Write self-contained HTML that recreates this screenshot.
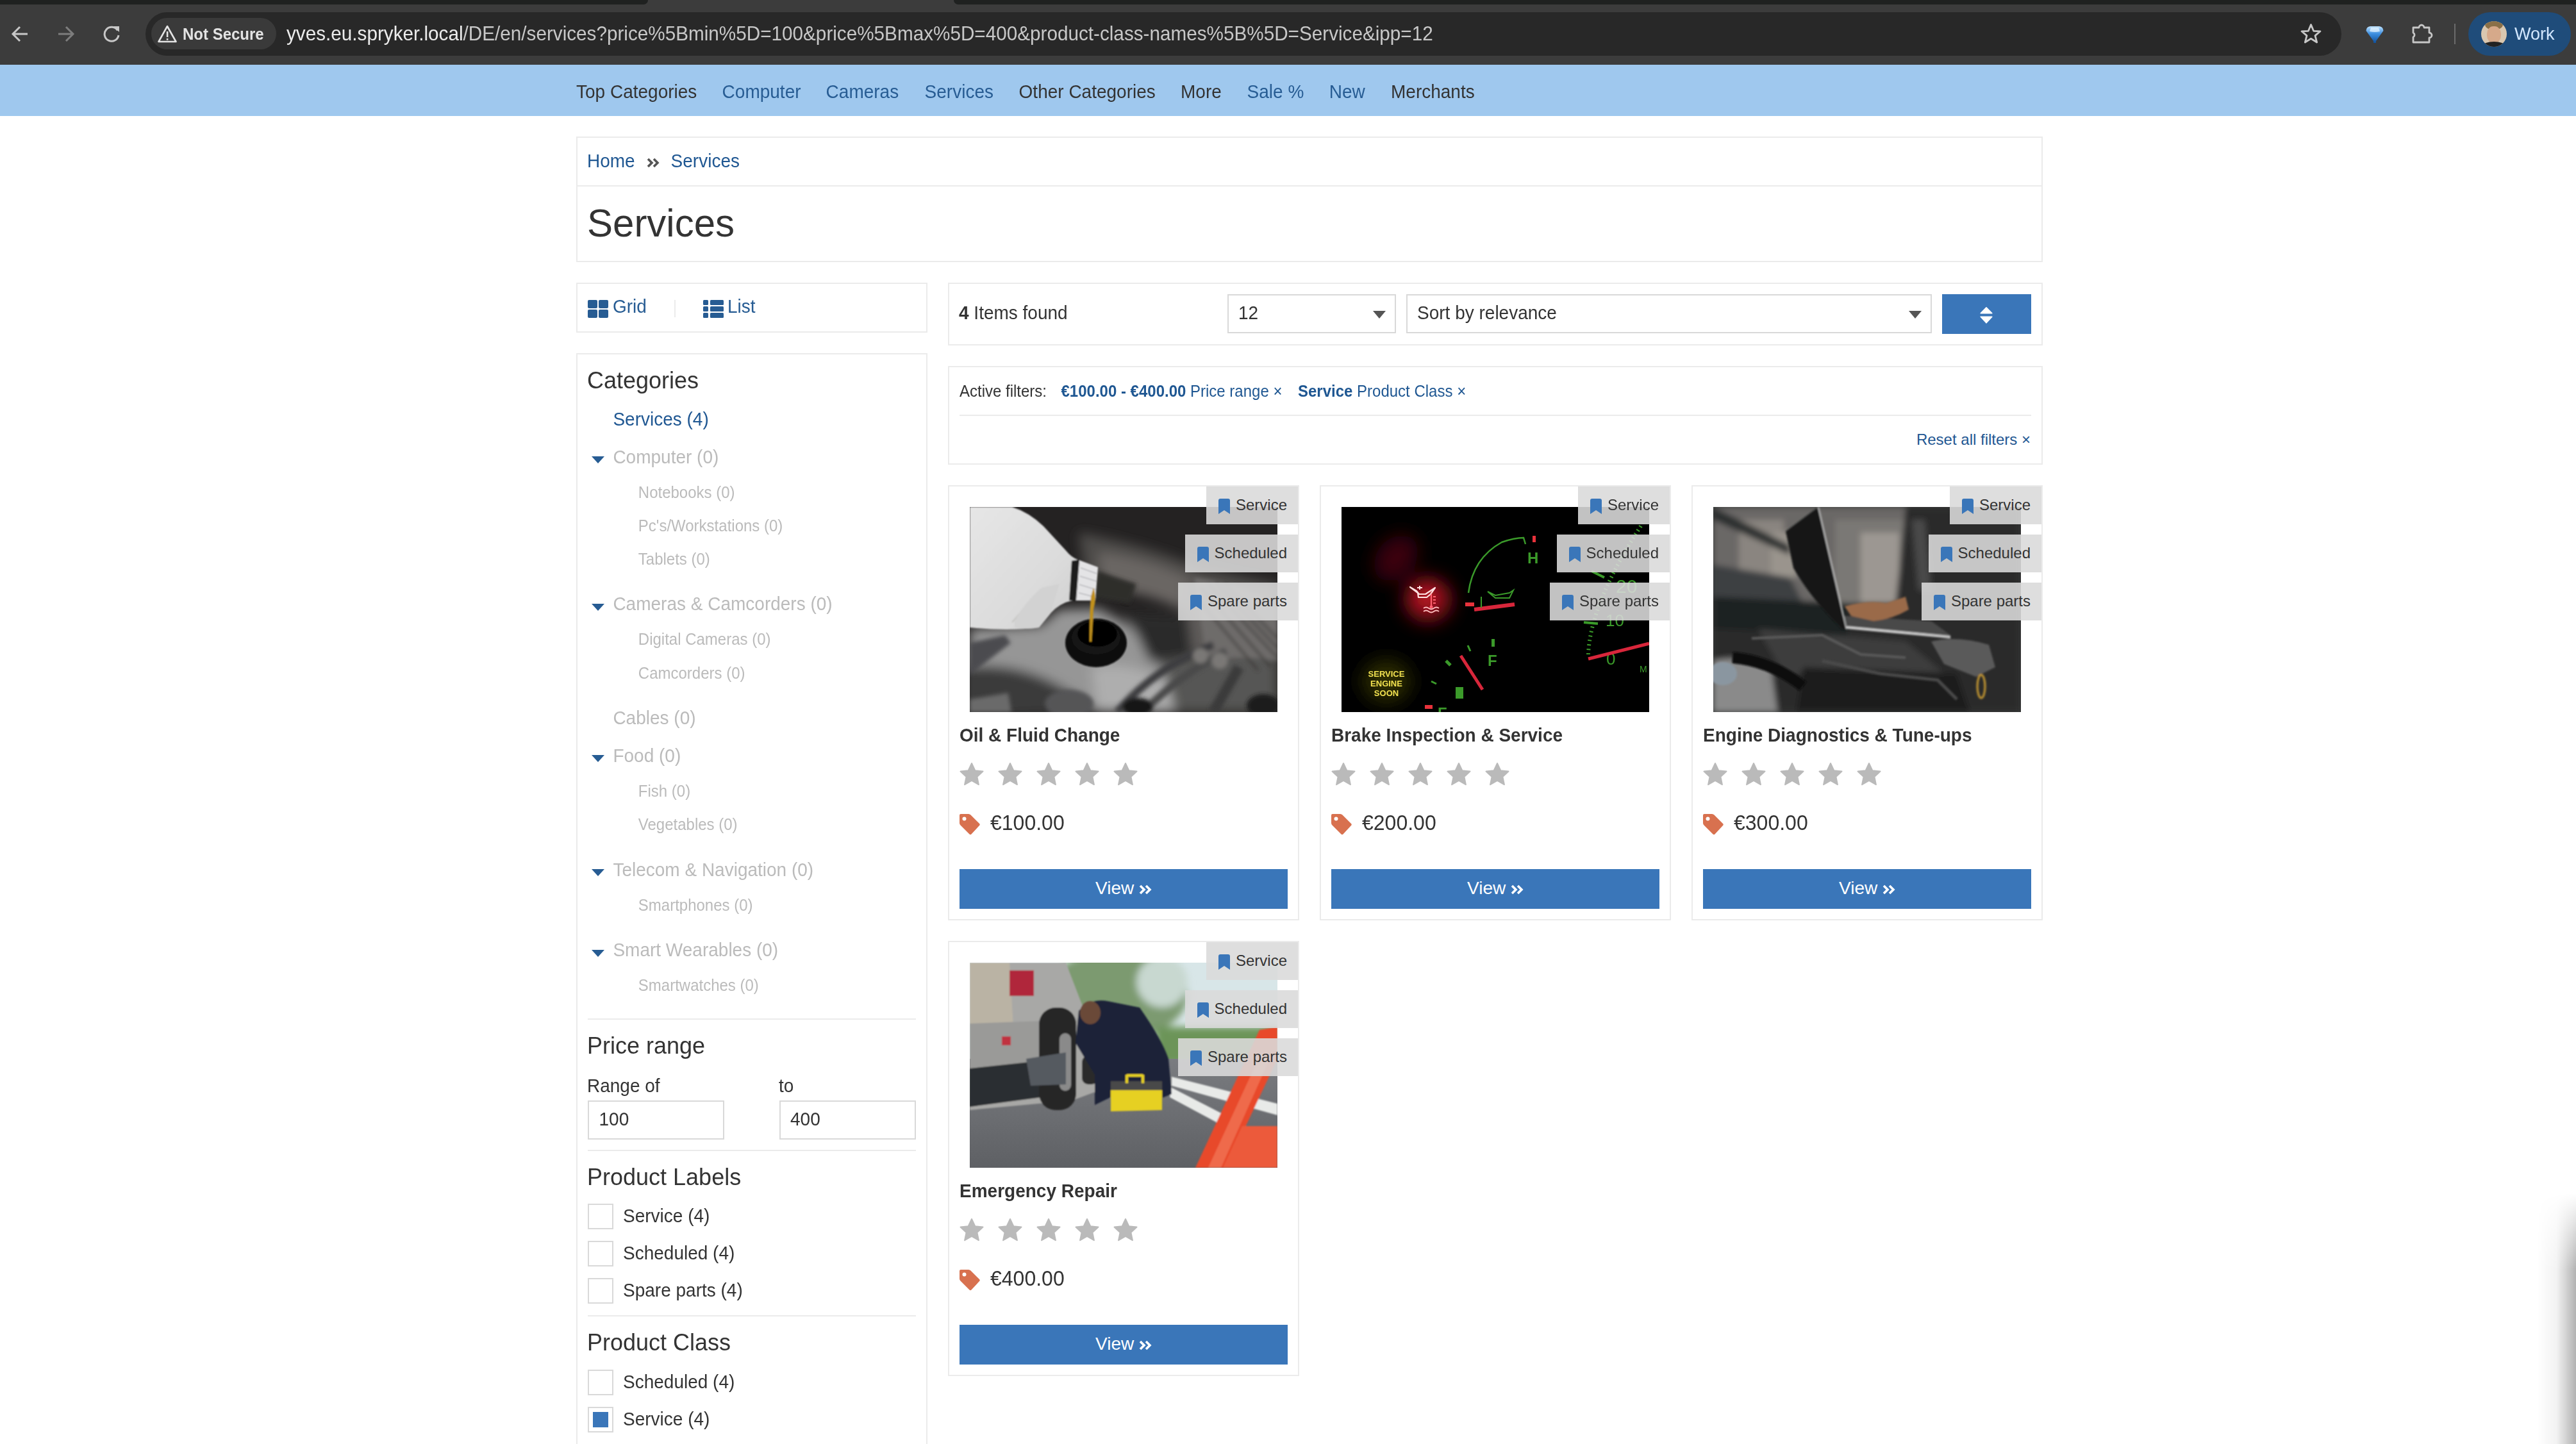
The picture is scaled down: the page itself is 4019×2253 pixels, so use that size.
<!DOCTYPE html>
<html><head><meta charset="utf-8"><title>Services</title>
<style>
html,body{margin:0;padding:0;background:#fff;width:4019px;height:2253px;overflow:hidden;position:relative}
.t{position:absolute;white-space:nowrap;line-height:1;font-family:"Liberation Sans", sans-serif}
.b{position:absolute}
b{font-weight:700}
</style></head><body>
<div class="b" style="left:0px;top:0px;width:4019px;height:101px;background:#3c3c3c;"></div><div class="b" style="left:0px;top:0px;width:1011px;height:7px;background:#1f2120;border-bottom-right-radius:12px;"></div><div class="b" style="left:1488px;top:0px;width:2531px;height:7px;background:#1f2120;border-bottom-left-radius:12px;"></div><div class="b" style="left:227px;top:19px;width:3426px;height:68px;background:#282828;border-radius:34px;"></div><div class="b" style="left:236px;top:28px;width:195px;height:49px;background:#3a3a3a;border-radius:25px;"></div><svg class="b" style="left:245px;top:38px" width="32" height="30" viewBox="0 0 32 30"><path d="M16 3 L29.5 27 H2.5 Z" fill="none" stroke="#e3e3e3" stroke-width="2.6" stroke-linejoin="round"/><rect x="14.8" y="11" width="2.6" height="9" fill="#e3e3e3"/><rect x="14.8" y="22" width="2.6" height="2.6" fill="#e3e3e3"/></svg><div class="t" style="left:285.0px;top:41.7px;font-size:24px;color:#e3e3e3;font-weight:700;transform-origin:0 20.3px;transform:scaleY(1.05);">Not Secure</div><svg class="b" style="left:17px;top:39px" width="28" height="28" viewBox="0 0 28 28"><path d="M26 14 H4 M14 3 L3 14 L14 25" fill="none" stroke="#c7c7c7" stroke-width="3"/></svg><svg class="b" style="left:89px;top:39px" width="28" height="28" viewBox="0 0 28 28"><path d="M2 14 H24 M14 3 L25 14 L14 25" fill="none" stroke="#7d7d7d" stroke-width="3"/></svg><svg class="b" style="left:160px;top:39px" width="30" height="28" viewBox="0 0 30 28"><path d="M23.5 8.5 A11 11 0 1 0 25 16" fill="none" stroke="#c7c7c7" stroke-width="3"/><path d="M17 2 H26 V11 Z" fill="#c7c7c7"/></svg><div class="t" style="left:447.0px;top:37.9px;font-size:29.7px;color:#c8c8c8;font-weight:400;transform-origin:0 25.1px;transform:scaleY(1.05);"><span style="color:#ececec">yves.eu.spryker.local</span>/DE/en/services?price%5Bmin%5D=100&amp;price%5Bmax%5D=400&amp;product-class-names%5B%5D=Service&amp;ipp=12</div><svg class="b" style="left:3588px;top:36px" width="35" height="32" viewBox="0 0 35 32"><path d="M17.5 2.5 L21.6 12.3 L32 12.8 L24 19.6 L26.7 30 L17.5 24.3 L8.3 30 L11 19.6 L3 12.8 L13.4 12.3 Z" fill="none" stroke="#c7c7c7" stroke-width="2.8" stroke-linejoin="round"/></svg><svg class="b" style="left:3690px;top:39px" width="30" height="30" viewBox="0 0 30 30"><defs><linearGradient id="dg" x1="0" y1="0" x2="0" y2="1"><stop offset="0" stop-color="#bfe3ff"/><stop offset="0.45" stop-color="#3d8fe0"/><stop offset="1" stop-color="#0f4f9a"/></linearGradient></defs><path d="M1.5 9 Q2 2.5 8 2 H22 Q28 2.5 28.5 9 L17 25 V28 H13 V25 Z" fill="url(#dg)"/><path d="M9 4 H21 L23 10 Q15 12 7 10 Z" fill="#e6f4ff" opacity="0.75"/></svg><svg class="b" style="left:3761px;top:33px" width="38" height="36" viewBox="0 0 38 36"><path d="M4 10 H13 A4 4 0 0 1 21 10 H29 V18 A4 4 0 0 1 29 26 V33 H4 V25 A4 4 0 0 0 4 18 Z" fill="none" stroke="#c7c7c7" stroke-width="2.8" stroke-linejoin="round"/></svg><div class="b" style="left:3829px;top:37px;width:2px;height:32px;background:#6b6b6b;"></div><div class="b" style="left:3851px;top:19px;width:160px;height:68px;background:#1f4c7a;border-radius:34px;"></div><div class="b" style="left:3871px;top:33px;width:40px;height:40px;border-radius:50%;overflow:hidden;background:#d9c7b0"><div style="position:absolute;left:6px;top:-4px;width:28px;height:18px;border-radius:50%;background:#8a7048"></div><div style="position:absolute;left:9px;top:8px;width:22px;height:26px;border-radius:45%;background:#d6a98a"></div><div style="position:absolute;left:2px;top:32px;width:36px;height:14px;border-radius:50%;background:#222"></div></div><div class="t" style="left:3923.0px;top:40.1px;font-size:27px;color:#d2e7ff;font-weight:400;transform-origin:0 22.9px;transform:scaleY(1.05);">Work</div><div class="b" style="left:0px;top:101px;width:4019px;height:80px;background:#9fc8ee;"></div><div class="t" style="left:899.0px;top:130.0px;font-size:28px;color:#333;font-weight:400;transform-origin:0 23.7px;transform:scaleY(1.05);">Top Categories</div><div class="t" style="left:1126.6px;top:130.0px;font-size:28px;color:#275c93;font-weight:400;transform-origin:0 23.7px;transform:scaleY(1.05);">Computer</div><div class="t" style="left:1288.6px;top:130.0px;font-size:28px;color:#275c93;font-weight:400;transform-origin:0 23.7px;transform:scaleY(1.05);">Cameras</div><div class="t" style="left:1442.6px;top:130.0px;font-size:28px;color:#275c93;font-weight:400;transform-origin:0 23.7px;transform:scaleY(1.05);">Services</div><div class="t" style="left:1589.6px;top:130.0px;font-size:28px;color:#333;font-weight:400;transform-origin:0 23.7px;transform:scaleY(1.05);">Other Categories</div><div class="t" style="left:1842.0px;top:130.0px;font-size:28px;color:#333;font-weight:400;transform-origin:0 23.7px;transform:scaleY(1.05);">More</div><div class="t" style="left:1945.6px;top:130.0px;font-size:28px;color:#275c93;font-weight:400;transform-origin:0 23.7px;transform:scaleY(1.05);">Sale %</div><div class="t" style="left:2073.8px;top:130.0px;font-size:28px;color:#275c93;font-weight:400;transform-origin:0 23.7px;transform:scaleY(1.05);">New</div><div class="t" style="left:2170.0px;top:130.0px;font-size:28px;color:#333;font-weight:400;transform-origin:0 23.7px;transform:scaleY(1.05);">Merchants</div><div class="b" style="left:899px;top:213px;width:2288px;height:196px;background:#fff;border:2px solid #ebebeb;box-sizing:border-box;"></div><div class="b" style="left:901px;top:289px;width:2284px;height:2px;background:#ebebeb;"></div><div class="t" style="left:916.0px;top:237.6px;font-size:28px;color:#1f5792;font-weight:400;transform-origin:0 23.7px;transform:scaleY(1.05);">Home</div><svg class="b" style="left:1009px;top:246px" width="20" height="16" viewBox="0 0 20 16"><path d="M2 2 L8 8 L2 14 M11 2 L17 8 L11 14" fill="none" stroke="#555" stroke-width="3.6"/></svg><div class="t" style="left:1046.6px;top:237.6px;font-size:28px;color:#1f5792;font-weight:400;transform-origin:0 23.7px;transform:scaleY(1.05);">Services</div><div class="t" style="left:916.0px;top:318.6px;font-size:60px;color:#333;font-weight:400;transform-origin:0 50.8px;transform:scaleY(1.01);">Services</div><div class="b" style="left:899px;top:441px;width:548px;height:78px;background:#fff;border:2px solid #ebebeb;box-sizing:border-box;"></div><svg class="b" style="left:917px;top:468px" width="32" height="28" viewBox="0 0 32 28"><rect x="0" y="0" width="15" height="13" rx="2" fill="#275c93"/><rect x="17" y="0" width="15" height="13" rx="2" fill="#275c93"/><rect x="0" y="15" width="15" height="13" rx="2" fill="#275c93"/><rect x="17" y="15" width="15" height="13" rx="2" fill="#275c93"/></svg><div class="t" style="left:956.0px;top:465.3px;font-size:28px;color:#275c93;font-weight:400;transform-origin:0 23.7px;transform:scaleY(1.05);">Grid</div><div class="b" style="left:1052px;top:468px;width:2px;height:27px;background:#ebebeb;"></div><svg class="b" style="left:1097px;top:468px" width="32" height="28" viewBox="0 0 32 28"><rect x="0" y="0" width="8" height="8" rx="1.5" fill="#275c93"/><rect x="11" y="0" width="21" height="8" rx="1.5" fill="#275c93"/><rect x="0" y="10" width="8" height="8" rx="1.5" fill="#275c93"/><rect x="11" y="10" width="21" height="8" rx="1.5" fill="#275c93"/><rect x="0" y="20" width="8" height="8" rx="1.5" fill="#275c93"/><rect x="11" y="20" width="21" height="8" rx="1.5" fill="#275c93"/></svg><div class="t" style="left:1135.0px;top:465.3px;font-size:28px;color:#275c93;font-weight:400;transform-origin:0 23.7px;transform:scaleY(1.05);">List</div><div class="b" style="left:1479px;top:441px;width:1708px;height:98px;background:#fff;border:2px solid #ebebeb;box-sizing:border-box;"></div><div class="t" style="left:1496.0px;top:475.3px;font-size:28px;color:#333;font-weight:400;transform-origin:0 23.7px;transform:scaleY(1.05);"><b>4</b> Items found</div><div class="b" style="left:1915px;top:459px;width:263px;height:61px;background:#fff;border:2px solid #d9d9d9;box-sizing:border-box;"></div><div class="t" style="left:1932.0px;top:475.3px;font-size:28px;color:#333;font-weight:400;transform-origin:0 23.7px;transform:scaleY(1.05);">12</div><svg class="b" style="left:2142px;top:485px" width="20" height="12" viewBox="0 0 20 12"><path d="M0 0 H20 L10 12 Z" fill="#555"/></svg><div class="b" style="left:2194px;top:459px;width:820px;height:61px;background:#fff;border:2px solid #d9d9d9;box-sizing:border-box;"></div><div class="t" style="left:2211.0px;top:475.3px;font-size:28px;color:#333;font-weight:400;transform-origin:0 23.7px;transform:scaleY(1.05);">Sort by relevance</div><svg class="b" style="left:2978px;top:485px" width="20" height="12" viewBox="0 0 20 12"><path d="M0 0 H20 L10 12 Z" fill="#555"/></svg><div class="b" style="left:3030px;top:459px;width:139px;height:62px;background:#3a76b9;"></div><svg class="b" style="left:3088px;top:478px" width="22" height="28" viewBox="0 0 22 28"><path d="M11 1.8 L19.8 10.8 H2.2 Z M2.2 16.2 H19.8 L11 25.8 Z" fill="#fff" stroke="#fff" stroke-width="1.6" stroke-linejoin="round"/></svg><div class="b" style="left:1479px;top:571px;width:1708px;height:154px;background:#fff;border:2px solid #ebebeb;box-sizing:border-box;"></div><div class="t" style="left:1497.0px;top:598.7px;font-size:24px;color:#333;font-weight:400;transform-origin:0 20.3px;transform:scaleY(1.05);">Active filters:</div><div class="t" style="left:1655.5px;top:598.7px;font-size:24px;color:#1f5792;font-weight:400;transform-origin:0 20.3px;transform:scaleY(1.05);"><b>€100.00 - €400.00</b> Price range ×</div><div class="t" style="left:2025.0px;top:598.7px;font-size:24px;color:#1f5792;font-weight:400;transform-origin:0 20.3px;transform:scaleY(1.05);"><b>Service</b> Product Class ×</div><div class="b" style="left:1497px;top:647px;width:1672px;height:2px;background:#ebebeb;"></div><div class="t" style="right:851px;top:674.3px;font-size:24px;color:#1f5792">Reset all filters ×</div><div class="b" style="left:899px;top:551px;width:548px;height:1749px;background:#fff;border:2px solid #ebebeb;box-sizing:border-box;"></div><div class="t" style="left:916.0px;top:575.5px;font-size:36px;color:#333;font-weight:400;transform-origin:0 30.5px;transform:scaleY(1.05);">Categories</div><div class="t" style="left:956.4px;top:641.0px;font-size:28px;color:#1f5792;font-weight:400;transform-origin:0 23.7px;transform:scaleY(1.05);">Services (4)</div><div class="t" style="left:956.4px;top:699.6px;font-size:28px;color:#bbb;font-weight:400;transform-origin:0 23.7px;transform:scaleY(1.05);">Computer (0)</div><svg class="b" style="left:923px;top:712.0px" width="20" height="11" viewBox="0 0 20 11"><path d="M0 0 H20 L10 11 Z" fill="#275c93"/></svg><div class="t" style="left:995.8px;top:756.7px;font-size:24px;color:#bbb;font-weight:400;transform-origin:0 20.3px;transform:scaleY(1.05);">Notebooks (0)</div><div class="t" style="left:995.8px;top:809.0px;font-size:24px;color:#bbb;font-weight:400;transform-origin:0 20.3px;transform:scaleY(1.05);">Pc's/Workstations (0)</div><div class="t" style="left:995.8px;top:860.8px;font-size:24px;color:#bbb;font-weight:400;transform-origin:0 20.3px;transform:scaleY(1.05);">Tablets (0)</div><div class="t" style="left:956.4px;top:929.2px;font-size:28px;color:#bbb;font-weight:400;transform-origin:0 23.7px;transform:scaleY(1.05);">Cameras &amp; Camcorders (0)</div><svg class="b" style="left:923px;top:941.6px" width="20" height="11" viewBox="0 0 20 11"><path d="M0 0 H20 L10 11 Z" fill="#275c93"/></svg><div class="t" style="left:995.8px;top:986.4px;font-size:24px;color:#bbb;font-weight:400;transform-origin:0 20.3px;transform:scaleY(1.05);">Digital Cameras (0)</div><div class="t" style="left:995.8px;top:1038.6px;font-size:24px;color:#bbb;font-weight:400;transform-origin:0 20.3px;transform:scaleY(1.05);">Camcorders (0)</div><div class="t" style="left:956.4px;top:1107.0px;font-size:28px;color:#bbb;font-weight:400;transform-origin:0 23.7px;transform:scaleY(1.05);">Cables (0)</div><div class="t" style="left:956.4px;top:1165.6px;font-size:28px;color:#bbb;font-weight:400;transform-origin:0 23.7px;transform:scaleY(1.05);">Food (0)</div><svg class="b" style="left:923px;top:1178.0px" width="20" height="11" viewBox="0 0 20 11"><path d="M0 0 H20 L10 11 Z" fill="#275c93"/></svg><div class="t" style="left:995.8px;top:1222.6px;font-size:24px;color:#bbb;font-weight:400;transform-origin:0 20.3px;transform:scaleY(1.05);">Fish (0)</div><div class="t" style="left:995.8px;top:1274.6px;font-size:24px;color:#bbb;font-weight:400;transform-origin:0 20.3px;transform:scaleY(1.05);">Vegetables (0)</div><div class="t" style="left:956.4px;top:1343.5px;font-size:28px;color:#bbb;font-weight:400;transform-origin:0 23.7px;transform:scaleY(1.05);">Telecom &amp; Navigation (0)</div><svg class="b" style="left:923px;top:1355.9px" width="20" height="11" viewBox="0 0 20 11"><path d="M0 0 H20 L10 11 Z" fill="#275c93"/></svg><div class="t" style="left:995.8px;top:1400.5px;font-size:24px;color:#bbb;font-weight:400;transform-origin:0 20.3px;transform:scaleY(1.05);">Smartphones (0)</div><div class="t" style="left:956.4px;top:1469.4px;font-size:28px;color:#bbb;font-weight:400;transform-origin:0 23.7px;transform:scaleY(1.05);">Smart Wearables (0)</div><svg class="b" style="left:923px;top:1481.8px" width="20" height="11" viewBox="0 0 20 11"><path d="M0 0 H20 L10 11 Z" fill="#275c93"/></svg><div class="t" style="left:995.8px;top:1526.4px;font-size:24px;color:#bbb;font-weight:400;transform-origin:0 20.3px;transform:scaleY(1.05);">Smartwatches (0)</div><div class="b" style="left:917px;top:1589px;width:512px;height:2px;background:#ebebeb;"></div><div class="t" style="left:916.0px;top:1614.3px;font-size:36px;color:#333;font-weight:400;transform-origin:0 30.5px;transform:scaleY(1.05);">Price range</div><div class="t" style="left:916.0px;top:1680.5px;font-size:28px;color:#333;font-weight:400;transform-origin:0 23.7px;transform:scaleY(1.05);">Range of</div><div class="t" style="left:1215.0px;top:1680.5px;font-size:28px;color:#333;font-weight:400;transform-origin:0 23.7px;transform:scaleY(1.05);">to</div><div class="b" style="left:917px;top:1717px;width:213px;height:61px;background:#fff;border:2px solid #d9d9d9;box-sizing:border-box;"></div><div class="b" style="left:1216px;top:1717px;width:213px;height:61px;background:#fff;border:2px solid #d9d9d9;box-sizing:border-box;"></div><div class="t" style="left:934.5px;top:1732.9px;font-size:28px;color:#333;font-weight:400;transform-origin:0 23.7px;transform:scaleY(1.05);">100</div><div class="t" style="left:1233.0px;top:1732.9px;font-size:28px;color:#333;font-weight:400;transform-origin:0 23.7px;transform:scaleY(1.05);">400</div><div class="b" style="left:917px;top:1794px;width:512px;height:2px;background:#ebebeb;"></div><div class="t" style="left:916.0px;top:1818.8px;font-size:36px;color:#333;font-weight:400;transform-origin:0 30.5px;transform:scaleY(1.05);">Product Labels</div><div class="b" style="left:917px;top:1878px;width:40px;height:40px;background:#fff;border:2px solid #d9d9d9;box-sizing:border-box;"></div><div class="t" style="left:972.0px;top:1883.5px;font-size:28px;color:#333;font-weight:400;transform-origin:0 23.7px;transform:scaleY(1.05);">Service (4)</div><div class="b" style="left:917px;top:1936px;width:40px;height:40px;background:#fff;border:2px solid #d9d9d9;box-sizing:border-box;"></div><div class="t" style="left:972.0px;top:1942.3px;font-size:28px;color:#333;font-weight:400;transform-origin:0 23.7px;transform:scaleY(1.05);">Scheduled (4)</div><div class="b" style="left:917px;top:1994px;width:40px;height:40px;background:#fff;border:2px solid #d9d9d9;box-sizing:border-box;"></div><div class="t" style="left:972.0px;top:2000.1px;font-size:28px;color:#333;font-weight:400;transform-origin:0 23.7px;transform:scaleY(1.05);">Spare parts (4)</div><div class="b" style="left:917px;top:2052px;width:512px;height:2px;background:#ebebeb;"></div><div class="t" style="left:916.0px;top:2076.8px;font-size:36px;color:#333;font-weight:400;transform-origin:0 30.5px;transform:scaleY(1.05);">Product Class</div><div class="b" style="left:917px;top:2137px;width:40px;height:40px;background:#fff;border:2px solid #d9d9d9;box-sizing:border-box;"></div><div class="t" style="left:972.0px;top:2142.8px;font-size:28px;color:#333;font-weight:400;transform-origin:0 23.7px;transform:scaleY(1.05);">Scheduled (4)</div><div class="b" style="left:917px;top:2195px;width:40px;height:40px;background:#fff;border:2px solid #d9d9d9;box-sizing:border-box;"></div><div class="b" style="left:925px;top:2203px;width:24px;height:24px;background:#3a76b9;"></div><div class="t" style="left:972.0px;top:2200.5px;font-size:28px;color:#333;font-weight:400;transform-origin:0 23.7px;transform:scaleY(1.05);">Service (4)</div><div class="b" style="left:1479px;top:757px;width:548px;height:679px;background:#fff;border:2px solid #ebebeb;box-sizing:border-box;"></div><div class="b" style="left:1513px;top:791px;width:480px;height:320px;overflow:hidden"><svg width="480" height="320" viewBox="0 0 480 320">
<defs>
<filter id="b1" x="-30%" y="-30%" width="160%" height="160%"><feGaussianBlur stdDeviation="9"/></filter>
<filter id="b1m" x="-30%" y="-30%" width="160%" height="160%"><feGaussianBlur stdDeviation="3"/></filter>
<filter id="b1s" x="-20%" y="-20%" width="140%" height="140%"><feGaussianBlur stdDeviation="0.8"/></filter>
<linearGradient id="bot" x1="0" y1="0" x2="1" y2="1"><stop offset="0" stop-color="#e6e6e6"/><stop offset="0.6" stop-color="#dcdcdc"/><stop offset="1" stop-color="#cfcfcf"/></linearGradient>
</defs>
<rect width="480" height="320" fill="#242222"/>
<g filter="url(#b1)">
<path d="M170 40 Q280 60 360 95 L480 120 L480 150 L360 140 Q270 120 180 110 Z" fill="#4e4b49"/>
<path d="M200 70 Q280 80 350 115 L330 160 Q270 130 210 130 Z" fill="#6a6663"/>
<path d="M330 120 L480 130 L480 250 L340 230 Z" fill="#5e5c5a"/>
<path d="M0 190 L110 185 L140 160 L200 158 L250 185 L300 250 L340 320 L0 320 Z" fill="#969696"/>
<path d="M190 250 Q250 240 300 270 L330 320 L200 320 Z" fill="#aeaeae"/>
<path d="M-10 250 Q100 235 200 320 L-10 330 Z" fill="#3a3a3a"/>
<path d="M245 165 L340 170 L350 250 L280 240 Z" fill="#2c2b2a"/>
<path d="M300 240 L480 220 L480 320 L320 320 Z" fill="#575654"/>
</g>
<g filter="url(#b1m)">
<path d="M0 212 L55 200 L64 212 L0 262 Z" fill="#4c4c50"/>
<path d="M350 110 Q420 120 480 150 L480 240 Q420 230 370 240 Z" fill="#6e6c6a"/>
<path d="M360 125 L470 250 M372 120 L480 235 M384 118 L480 220 M396 118 L480 205 M348 135 L450 255" stroke="#3a3836" stroke-width="3" fill="none"/>
<path d="M230 320 Q290 250 380 215" stroke="#3e3e40" stroke-width="12" fill="none"/>
<path d="M270 320 Q330 260 400 225" stroke="#48484a" stroke-width="12" fill="none"/>
<path d="M380 320 L420 250" stroke="#3a3a3a" stroke-width="16" fill="none"/>
<ellipse cx="360" cy="232" rx="12" ry="12" fill="#7a7876"/>
<ellipse cx="390" cy="240" rx="13" ry="13" fill="#7a7876"/>
<path d="M200 100 L260 120 L250 150 L190 140 Z" fill="#2e2d2c"/>
<ellipse cx="155" cy="307" rx="38" ry="22" fill="#555556"/>
<ellipse cx="262" cy="312" rx="24" ry="14" fill="#151515"/>
<ellipse cx="458" cy="310" rx="26" ry="18" fill="#1a1a1a"/>
<path d="M0 300 L60 290 L65 320 L0 320 Z" fill="#6a6a6a"/>
</g>
<g filter="url(#b1s)">
<ellipse cx="197" cy="212" rx="48" ry="38" fill="#0a0a0a"/>
<ellipse cx="197" cy="204" rx="38" ry="26" fill="#161616"/>
<ellipse cx="199" cy="198" rx="31" ry="20" fill="#030303"/>
<path d="M0 0 L66 0 Q92 8 115 30 L150 68 Q158 78 168 82 L160 146 Q140 150 126 166 L108 188 Q60 194 0 188 Z" fill="url(#bot)"/>
<path d="M66 180 L112 128 M78 186 L120 138 M92 188 L128 146" stroke="#c8c8c6" stroke-width="2.5"/>
<path d="M70 178 Q85 150 112 126 L140 120 L126 166 L108 188 Q90 192 70 188 Z" fill="#d2d2d2"/>
<path d="M159 84 L171 82 L166 146 L155 146 Z" fill="#1c1c1c"/>
<path d="M171 83 L200 94 L196 146 L166 146 Z" fill="#e4e4e6"/>
<path d="M173 95 L198 104 M172 108 L198 116 M171 121 L197 129 M170 134 L197 141" stroke="#b8b8bc" stroke-width="1.5"/>
<path d="M193 126 Q199 140 193 160 L190 210 L187 210 Q187 160 189 140 Z" fill="#c0901e"/>
</g>
</svg></div><div class="b" style="left:1882px;top:759px;width:143px;height:59px;background:rgba(218,218,218,0.89)"></div><svg class="b" style="left:1901px;top:778px" width="18" height="24" viewBox="0 0 18 24"><path d="M0 3 Q0 0 3 0 H15 Q18 0 18 3 V24 L9 18 L0 24 Z" fill="#3a76b9"/></svg><div class="t" style="right:2011px;top:775.7px;font-size:24px;color:#333">Service</div><div class="b" style="left:1849px;top:834px;width:176px;height:59px;background:rgba(218,218,218,0.89)"></div><svg class="b" style="left:1868px;top:853px" width="18" height="24" viewBox="0 0 18 24"><path d="M0 3 Q0 0 3 0 H15 Q18 0 18 3 V24 L9 18 L0 24 Z" fill="#3a76b9"/></svg><div class="t" style="right:2011px;top:850.7px;font-size:24px;color:#333">Scheduled</div><div class="b" style="left:1838px;top:909px;width:187px;height:59px;background:rgba(218,218,218,0.89)"></div><svg class="b" style="left:1857px;top:928px" width="18" height="24" viewBox="0 0 18 24"><path d="M0 3 Q0 0 3 0 H15 Q18 0 18 3 V24 L9 18 L0 24 Z" fill="#3a76b9"/></svg><div class="t" style="right:2011px;top:925.7px;font-size:24px;color:#333">Spare parts</div><div class="t" style="left:1497.0px;top:1134.0px;font-size:28px;color:#333;font-weight:700;transform-origin:0 23.7px;transform:scaleY(1.05);">Oil &amp; Fluid Change</div><svg class="b" style="left:1497.0px;top:1190px" width="38" height="37" viewBox="0 0 38 37"><path d="M19 1 L24.3 12.2 L36.5 13.6 L27.4 22 L29.9 34.2 L19 28 L8.1 34.2 L10.6 22 L1.5 13.6 L13.7 12.2 Z" fill="#bababa" stroke="#bababa" stroke-width="2" stroke-linejoin="round"/></svg><svg class="b" style="left:1557.1px;top:1190px" width="38" height="37" viewBox="0 0 38 37"><path d="M19 1 L24.3 12.2 L36.5 13.6 L27.4 22 L29.9 34.2 L19 28 L8.1 34.2 L10.6 22 L1.5 13.6 L13.7 12.2 Z" fill="#bababa" stroke="#bababa" stroke-width="2" stroke-linejoin="round"/></svg><svg class="b" style="left:1617.2px;top:1190px" width="38" height="37" viewBox="0 0 38 37"><path d="M19 1 L24.3 12.2 L36.5 13.6 L27.4 22 L29.9 34.2 L19 28 L8.1 34.2 L10.6 22 L1.5 13.6 L13.7 12.2 Z" fill="#bababa" stroke="#bababa" stroke-width="2" stroke-linejoin="round"/></svg><svg class="b" style="left:1677.3px;top:1190px" width="38" height="37" viewBox="0 0 38 37"><path d="M19 1 L24.3 12.2 L36.5 13.6 L27.4 22 L29.9 34.2 L19 28 L8.1 34.2 L10.6 22 L1.5 13.6 L13.7 12.2 Z" fill="#bababa" stroke="#bababa" stroke-width="2" stroke-linejoin="round"/></svg><svg class="b" style="left:1737.4px;top:1190px" width="38" height="37" viewBox="0 0 38 37"><path d="M19 1 L24.3 12.2 L36.5 13.6 L27.4 22 L29.9 34.2 L19 28 L8.1 34.2 L10.6 22 L1.5 13.6 L13.7 12.2 Z" fill="#bababa" stroke="#bababa" stroke-width="2" stroke-linejoin="round"/></svg><svg class="b" style="left:1497px;top:1270px" width="32" height="33" viewBox="0 0 32 33"><path d="M2 0 H14 Q16 0 17.5 1.5 L31 15 Q32.5 16.5 31 18 L18.5 31.5 Q17 33 15.5 31.5 L1.5 17.5 Q0 16 0 14 V2 Q0 0 2 0 Z" fill="#d8714f"/><circle cx="7.5" cy="7.5" r="3" fill="#fff"/></svg><div class="t" style="left:1545.0px;top:1267.5px;font-size:32px;color:#333;font-weight:400;transform-origin:0 27.1px;transform:scaleY(1.05);">€100.00</div><div class="b" style="left:1497px;top:1356px;width:512px;height:62px;background:#3a76b9;"></div><div class="t" style="left:1497px;width:512px;text-align:center;top:1372.0px;font-size:28px;color:#fff">View <svg width="20" height="16" viewBox="0 0 20 16" style="vertical-align:-1px"><path d="M2 2 L8 8 L2 14 M11 2 L17 8 L11 14" fill="none" stroke="#fff" stroke-width="3.6"/></svg></div><div class="b" style="left:2059px;top:757px;width:548px;height:679px;background:#fff;border:2px solid #ebebeb;box-sizing:border-box;"></div><div class="b" style="left:2093px;top:791px;width:480px;height:320px;overflow:hidden"><svg width="480" height="320" viewBox="0 0 480 320">
<defs>
<filter id="b2" x="-50%" y="-50%" width="200%" height="200%"><feGaussianBlur stdDeviation="14"/></filter>
<filter id="b2s" x="-50%" y="-50%" width="200%" height="200%"><feGaussianBlur stdDeviation="0.6"/></filter>
</defs>
<rect width="480" height="320" fill="#000"/>
<g filter="url(#b2)">
<ellipse cx="135" cy="145" rx="38" ry="36" fill="#7a0812"/>
<ellipse cx="132" cy="140" rx="20" ry="18" fill="#c01828"/>
<ellipse cx="85" cy="80" rx="30" ry="40" fill="#3a040a" transform="rotate(40 85 80)"/>
<ellipse cx="70" cy="272" rx="38" ry="34" fill="#2a2a04"/>
</g>
<g filter="url(#b2s)">
<path d="M107 125 L117 131 L121 136 H131 L146 126 L139 136 L133 141 H120 L119 134 Z" fill="none" stroke="#ffe0e0" stroke-width="2.2" stroke-linejoin="round"/>
<path d="M118 126 H126 M122 123 V129" stroke="#ffe0e0" stroke-width="2"/>
<path d="M140 132 V141" stroke="#ffb0b0" stroke-width="1.5"/>
<path d="M140 136 V155 M143 140 H147 M143 145 H147 M143 150 H147" fill="none" stroke="#ff6070" stroke-width="2.2"/>
<circle cx="140" cy="156" r="2.5" fill="#ff6070"/>
<path d="M128 158 Q132 155 136 158 Q140 161 144 158 Q148 155 152 158 M128 163 Q132 160 136 163 Q140 166 144 163 Q148 160 152 163" fill="none" stroke="#ffc0c0" stroke-width="1.8"/>
<path d="M198 134 Q205 80 250 55 Q270 48 284 48 L287 58" fill="none" stroke="#3a9a2a" stroke-width="2.5"/>
<rect x="298" y="45" width="5" height="10" fill="#e8303a"/>
<text x="290" y="88" font-family="Liberation Sans" font-size="24" font-weight="700" fill="#3a9a2a">H</text>
<rect x="193" y="149" width="14" height="6" fill="#e8303a"/>
<path d="M207 160 L270 152" stroke="#d8283a" stroke-width="6"/>
<path d="M218 140 V157" stroke="#3a9a2a" stroke-width="2"/>
<path d="M228 132 L240 138 L262 134 L268 130 L262 142 L240 142 Z" fill="none" stroke="#3a9a2a" stroke-width="2"/>
<text x="228" y="248" font-family="Liberation Sans" font-size="24" font-weight="700" fill="#3a9a2a">F</text>
<path d="M186 232 L220 285" stroke="#d8283a" stroke-width="5"/>
<rect x="234" y="206" width="5" height="12" fill="#3a9a2a"/>
<path d="M197 216 L201 225" stroke="#3a9a2a" stroke-width="3"/>
<path d="M163 240 L170 247" stroke="#3a9a2a" stroke-width="5"/>
<path d="M140 272 L148 276" stroke="#3a9a2a" stroke-width="3"/>
<rect x="178" y="281" width="12" height="18" fill="#3a9a2a"/>
<rect x="130" y="309" width="12" height="6" fill="#e8303a"/>
<text x="150" y="330" font-family="Liberation Sans" font-size="24" font-weight="700" fill="#3a9a2a">F</text>
<text x="70" y="265" font-family="Liberation Sans" font-size="13" font-weight="700" fill="#f0e050" text-anchor="middle">SERVICE</text>
<text x="70" y="280" font-family="Liberation Sans" font-size="13" font-weight="700" fill="#f0e050" text-anchor="middle">ENGINE</text>
<text x="70" y="295" font-family="Liberation Sans" font-size="13" font-weight="700" fill="#f0e050" text-anchor="middle">SOON</text>
<path d="M385 230 Q388 150 470 25" fill="none" stroke="#3a9a2a" stroke-width="6" stroke-dasharray="2 5"/>
<path d="M378 180 L400 182 M390 100 L410 110" stroke="#3a9a2a" stroke-width="4"/>
<text x="428" y="134" font-family="Liberation Sans" font-size="30" fill="#3a9a2a">20</text>
<text x="412" y="186" font-family="Liberation Sans" font-size="26" fill="#3a9a2a">10</text>
<text x="413" y="246" font-family="Liberation Sans" font-size="26" fill="#3a9a2a">0</text>
<path d="M385 237 L480 213" stroke="#d8283a" stroke-width="5"/>
<text x="465" y="258" font-family="Liberation Sans" font-size="14" fill="#3a9a2a">M</text>
</g>
</svg></div><div class="b" style="left:2462px;top:759px;width:143px;height:59px;background:rgba(218,218,218,0.89)"></div><svg class="b" style="left:2481px;top:778px" width="18" height="24" viewBox="0 0 18 24"><path d="M0 3 Q0 0 3 0 H15 Q18 0 18 3 V24 L9 18 L0 24 Z" fill="#3a76b9"/></svg><div class="t" style="right:1431px;top:775.7px;font-size:24px;color:#333">Service</div><div class="b" style="left:2429px;top:834px;width:176px;height:59px;background:rgba(218,218,218,0.89)"></div><svg class="b" style="left:2448px;top:853px" width="18" height="24" viewBox="0 0 18 24"><path d="M0 3 Q0 0 3 0 H15 Q18 0 18 3 V24 L9 18 L0 24 Z" fill="#3a76b9"/></svg><div class="t" style="right:1431px;top:850.7px;font-size:24px;color:#333">Scheduled</div><div class="b" style="left:2418px;top:909px;width:187px;height:59px;background:rgba(218,218,218,0.89)"></div><svg class="b" style="left:2437px;top:928px" width="18" height="24" viewBox="0 0 18 24"><path d="M0 3 Q0 0 3 0 H15 Q18 0 18 3 V24 L9 18 L0 24 Z" fill="#3a76b9"/></svg><div class="t" style="right:1431px;top:925.7px;font-size:24px;color:#333">Spare parts</div><div class="t" style="left:2077.0px;top:1134.0px;font-size:28px;color:#333;font-weight:700;transform-origin:0 23.7px;transform:scaleY(1.05);">Brake Inspection &amp; Service</div><svg class="b" style="left:2077.0px;top:1190px" width="38" height="37" viewBox="0 0 38 37"><path d="M19 1 L24.3 12.2 L36.5 13.6 L27.4 22 L29.9 34.2 L19 28 L8.1 34.2 L10.6 22 L1.5 13.6 L13.7 12.2 Z" fill="#bababa" stroke="#bababa" stroke-width="2" stroke-linejoin="round"/></svg><svg class="b" style="left:2137.1px;top:1190px" width="38" height="37" viewBox="0 0 38 37"><path d="M19 1 L24.3 12.2 L36.5 13.6 L27.4 22 L29.9 34.2 L19 28 L8.1 34.2 L10.6 22 L1.5 13.6 L13.7 12.2 Z" fill="#bababa" stroke="#bababa" stroke-width="2" stroke-linejoin="round"/></svg><svg class="b" style="left:2197.2px;top:1190px" width="38" height="37" viewBox="0 0 38 37"><path d="M19 1 L24.3 12.2 L36.5 13.6 L27.4 22 L29.9 34.2 L19 28 L8.1 34.2 L10.6 22 L1.5 13.6 L13.7 12.2 Z" fill="#bababa" stroke="#bababa" stroke-width="2" stroke-linejoin="round"/></svg><svg class="b" style="left:2257.3px;top:1190px" width="38" height="37" viewBox="0 0 38 37"><path d="M19 1 L24.3 12.2 L36.5 13.6 L27.4 22 L29.9 34.2 L19 28 L8.1 34.2 L10.6 22 L1.5 13.6 L13.7 12.2 Z" fill="#bababa" stroke="#bababa" stroke-width="2" stroke-linejoin="round"/></svg><svg class="b" style="left:2317.4px;top:1190px" width="38" height="37" viewBox="0 0 38 37"><path d="M19 1 L24.3 12.2 L36.5 13.6 L27.4 22 L29.9 34.2 L19 28 L8.1 34.2 L10.6 22 L1.5 13.6 L13.7 12.2 Z" fill="#bababa" stroke="#bababa" stroke-width="2" stroke-linejoin="round"/></svg><svg class="b" style="left:2077px;top:1270px" width="32" height="33" viewBox="0 0 32 33"><path d="M2 0 H14 Q16 0 17.5 1.5 L31 15 Q32.5 16.5 31 18 L18.5 31.5 Q17 33 15.5 31.5 L1.5 17.5 Q0 16 0 14 V2 Q0 0 2 0 Z" fill="#d8714f"/><circle cx="7.5" cy="7.5" r="3" fill="#fff"/></svg><div class="t" style="left:2125.0px;top:1267.5px;font-size:32px;color:#333;font-weight:400;transform-origin:0 27.1px;transform:scaleY(1.05);">€200.00</div><div class="b" style="left:2077px;top:1356px;width:512px;height:62px;background:#3a76b9;"></div><div class="t" style="left:2077px;width:512px;text-align:center;top:1372.0px;font-size:28px;color:#fff">View <svg width="20" height="16" viewBox="0 0 20 16" style="vertical-align:-1px"><path d="M2 2 L8 8 L2 14 M11 2 L17 8 L11 14" fill="none" stroke="#fff" stroke-width="3.6"/></svg></div><div class="b" style="left:2639px;top:757px;width:548px;height:679px;background:#fff;border:2px solid #ebebeb;box-sizing:border-box;"></div><div class="b" style="left:2673px;top:791px;width:480px;height:320px;overflow:hidden"><svg width="480" height="320" viewBox="0 0 480 320">
<defs>
<filter id="b3" x="-20%" y="-20%" width="140%" height="140%"><feGaussianBlur stdDeviation="5"/></filter>
<filter id="b3s" x="-20%" y="-20%" width="140%" height="140%"><feGaussianBlur stdDeviation="1.5"/></filter>
</defs>
<rect width="480" height="320" fill="#3a3c3b"/>
<g filter="url(#b3)">
<rect x="0" y="0" width="300" height="150" fill="#6a6866"/>
<rect x="40" y="20" width="70" height="90" fill="#8a8580"/>
<rect x="90" y="40" width="40" height="70" fill="#9a948d"/>
<rect x="190" y="20" width="110" height="140" fill="#7a7874"/>
<rect x="230" y="40" width="60" height="110" fill="#9c9792"/>
<path d="M0 0 L120 60 L120 75 L0 20 Z" fill="#2a2d2e"/>
<path d="M0 90 L120 110 L140 150 L0 150 Z" fill="#3c4142"/>
<path d="M300 0 L480 0 L480 200 L280 190 L290 100 Z" fill="#2a2a2a"/>
<path d="M310 20 L330 20 L340 130 L320 130 Z" fill="#4a4a4a"/>
<rect x="0" y="150" width="480" height="170" fill="#2a2a2a"/>
<path d="M0 140 L210 150 L210 200 L0 190 Z" fill="#1e2020"/>
<path d="M0 240 Q40 230 90 250 L100 320 L0 320 Z" fill="#8a8a8a"/>
<path d="M70 190 L300 210 L360 260 L110 260 Z" fill="#3e3e3e"/>
<path d="M140 250 L380 260 L400 320 L130 320 Z" fill="#1c1c1c"/>
</g>
<g filter="url(#b3s)">
<path d="M113 38 L164 0 L208 192 L200 190 Q150 140 125 95 Z" fill="#121614"/>
<path d="M164 0 L208 190" stroke="#dcdcdc" stroke-width="1.5"/>
<path d="M205 170 L340 178 L370 200 L210 188 Z" fill="#4a4a4a"/>
<path d="M208 188 L370 203" stroke="#cfcfcf" stroke-width="4"/>
<path d="M205 155 Q240 145 270 150 L300 140 L305 160 Q280 175 250 178 L215 170 Z" fill="#9a6a4a"/>
<path d="M340 210 Q380 200 430 215 L440 250 L410 265 L360 245 Z" fill="#5a5a5a"/>
<path d="M60 205 L170 200 L230 230 L300 235" stroke="#5a5a5a" stroke-width="4" fill="none"/>
<path d="M170 240 L260 260 L350 270 L380 300" stroke="#4a4a4a" stroke-width="5" fill="none"/>
<path d="M30 235 Q90 240 140 280" stroke="#111" stroke-width="18" fill="none"/>
<ellipse cx="15" cy="260" rx="22" ry="18" fill="#8a96a0"/>
<ellipse cx="418" cy="280" rx="6" ry="18" fill="none" stroke="#c89a30" stroke-width="3"/>
</g>
</svg></div><div class="b" style="left:3042px;top:759px;width:143px;height:59px;background:rgba(218,218,218,0.89)"></div><svg class="b" style="left:3061px;top:778px" width="18" height="24" viewBox="0 0 18 24"><path d="M0 3 Q0 0 3 0 H15 Q18 0 18 3 V24 L9 18 L0 24 Z" fill="#3a76b9"/></svg><div class="t" style="right:851px;top:775.7px;font-size:24px;color:#333">Service</div><div class="b" style="left:3009px;top:834px;width:176px;height:59px;background:rgba(218,218,218,0.89)"></div><svg class="b" style="left:3028px;top:853px" width="18" height="24" viewBox="0 0 18 24"><path d="M0 3 Q0 0 3 0 H15 Q18 0 18 3 V24 L9 18 L0 24 Z" fill="#3a76b9"/></svg><div class="t" style="right:851px;top:850.7px;font-size:24px;color:#333">Scheduled</div><div class="b" style="left:2998px;top:909px;width:187px;height:59px;background:rgba(218,218,218,0.89)"></div><svg class="b" style="left:3017px;top:928px" width="18" height="24" viewBox="0 0 18 24"><path d="M0 3 Q0 0 3 0 H15 Q18 0 18 3 V24 L9 18 L0 24 Z" fill="#3a76b9"/></svg><div class="t" style="right:851px;top:925.7px;font-size:24px;color:#333">Spare parts</div><div class="t" style="left:2657.0px;top:1134.0px;font-size:28px;color:#333;font-weight:700;transform-origin:0 23.7px;transform:scaleY(1.05);">Engine Diagnostics &amp; Tune-ups</div><svg class="b" style="left:2657.0px;top:1190px" width="38" height="37" viewBox="0 0 38 37"><path d="M19 1 L24.3 12.2 L36.5 13.6 L27.4 22 L29.9 34.2 L19 28 L8.1 34.2 L10.6 22 L1.5 13.6 L13.7 12.2 Z" fill="#bababa" stroke="#bababa" stroke-width="2" stroke-linejoin="round"/></svg><svg class="b" style="left:2717.1px;top:1190px" width="38" height="37" viewBox="0 0 38 37"><path d="M19 1 L24.3 12.2 L36.5 13.6 L27.4 22 L29.9 34.2 L19 28 L8.1 34.2 L10.6 22 L1.5 13.6 L13.7 12.2 Z" fill="#bababa" stroke="#bababa" stroke-width="2" stroke-linejoin="round"/></svg><svg class="b" style="left:2777.2px;top:1190px" width="38" height="37" viewBox="0 0 38 37"><path d="M19 1 L24.3 12.2 L36.5 13.6 L27.4 22 L29.9 34.2 L19 28 L8.1 34.2 L10.6 22 L1.5 13.6 L13.7 12.2 Z" fill="#bababa" stroke="#bababa" stroke-width="2" stroke-linejoin="round"/></svg><svg class="b" style="left:2837.3px;top:1190px" width="38" height="37" viewBox="0 0 38 37"><path d="M19 1 L24.3 12.2 L36.5 13.6 L27.4 22 L29.9 34.2 L19 28 L8.1 34.2 L10.6 22 L1.5 13.6 L13.7 12.2 Z" fill="#bababa" stroke="#bababa" stroke-width="2" stroke-linejoin="round"/></svg><svg class="b" style="left:2897.4px;top:1190px" width="38" height="37" viewBox="0 0 38 37"><path d="M19 1 L24.3 12.2 L36.5 13.6 L27.4 22 L29.9 34.2 L19 28 L8.1 34.2 L10.6 22 L1.5 13.6 L13.7 12.2 Z" fill="#bababa" stroke="#bababa" stroke-width="2" stroke-linejoin="round"/></svg><svg class="b" style="left:2657px;top:1270px" width="32" height="33" viewBox="0 0 32 33"><path d="M2 0 H14 Q16 0 17.5 1.5 L31 15 Q32.5 16.5 31 18 L18.5 31.5 Q17 33 15.5 31.5 L1.5 17.5 Q0 16 0 14 V2 Q0 0 2 0 Z" fill="#d8714f"/><circle cx="7.5" cy="7.5" r="3" fill="#fff"/></svg><div class="t" style="left:2705.0px;top:1267.5px;font-size:32px;color:#333;font-weight:400;transform-origin:0 27.1px;transform:scaleY(1.05);">€300.00</div><div class="b" style="left:2657px;top:1356px;width:512px;height:62px;background:#3a76b9;"></div><div class="t" style="left:2657px;width:512px;text-align:center;top:1372.0px;font-size:28px;color:#fff">View <svg width="20" height="16" viewBox="0 0 20 16" style="vertical-align:-1px"><path d="M2 2 L8 8 L2 14 M11 2 L17 8 L11 14" fill="none" stroke="#fff" stroke-width="3.6"/></svg></div><div class="b" style="left:1479px;top:1468px;width:548px;height:679px;background:#fff;border:2px solid #ebebeb;box-sizing:border-box;"></div><div class="b" style="left:1513px;top:1502px;width:480px;height:320px;overflow:hidden"><svg width="480" height="320" viewBox="0 0 480 320">
<defs>
<filter id="b4" x="-20%" y="-20%" width="140%" height="140%"><feGaussianBlur stdDeviation="6"/></filter>
<filter id="b4s" x="-20%" y="-20%" width="140%" height="140%"><feGaussianBlur stdDeviation="1.2"/></filter>
<linearGradient id="road" x1="0" y1="0" x2="0" y2="1"><stop offset="0" stop-color="#7a7c80"/><stop offset="1" stop-color="#5e6064"/></linearGradient>
</defs>
<rect width="480" height="320" fill="#d8e6e8"/>
<g filter="url(#b4)">
<ellipse cx="230" cy="50" rx="110" ry="70" fill="#7c9a70"/>
<ellipse cx="300" cy="30" rx="40" ry="40" fill="#c8d8d0"/>
<rect x="290" y="100" width="190" height="60" fill="#6c9458"/>
</g>
<rect x="0" y="150" width="480" height="170" fill="url(#road)"/>
<g filter="url(#b4s)">
<path d="M315 178 L480 220 L480 238 L315 192 Z" fill="#e8eae8"/>
<path d="M315 195 L480 280 L480 300 L312 210 Z" fill="#e8eae8"/>
<path d="M0 0 L150 0 L200 130 L200 200 L160 215 L0 230 Z" fill="#a8a8a6"/>
<path d="M0 0 L62 0 L68 100 L0 100 Z" fill="#bab3a4"/>
<rect x="62" y="12" width="38" height="40" fill="#b0283a"/>
<path d="M0 95 L140 90 L140 150 L0 165 Z" fill="#9a9a98"/>
<rect x="50" y="115" width="14" height="14" fill="#c03040"/>
<path d="M0 165 L140 150 L150 205 L0 225 Z" fill="#2c2e30"/>
<rect x="108" y="70" width="58" height="160" rx="26" fill="#262626"/>
<rect x="140" y="110" width="18" height="90" rx="9" fill="#8a8a8a"/>
<path d="M88 150 L150 140 L150 190 L95 192 Z" fill="#555a60"/>
<rect x="175" y="145" width="25" height="45" rx="10" fill="#2a2a2a"/>
<path d="M170 75 Q190 55 215 60 L265 70 Q300 120 310 150 L315 205 L290 215 L230 205 L195 222 L195 175 L165 125 Z" fill="#1c2438"/>
<ellipse cx="188" cy="78" rx="16" ry="18" fill="#6a4a38"/>
<path d="M220 195 L300 195 L300 230 L220 232 Z" fill="#e6d024"/>
<rect x="220" y="185" width="80" height="14" fill="#4a4a4a"/>
<path d="M245 175 V188 M270 175 V188 M245 176 H270" stroke="#e6d024" stroke-width="4" fill="none"/>
<path d="M352 320 L452 105 L480 100 L480 150 L400 320 Z" fill="#e84a2c"/>
<path d="M395 320 L425 255 L480 255 L480 320 Z" fill="#ec5a3a"/>
<path d="M372 320 L455 140 L468 150 L392 320 Z" fill="#f58a6a" opacity="0.5"/>
</g>
</svg></div><div class="b" style="left:1882px;top:1470px;width:143px;height:59px;background:rgba(218,218,218,0.89)"></div><svg class="b" style="left:1901px;top:1489px" width="18" height="24" viewBox="0 0 18 24"><path d="M0 3 Q0 0 3 0 H15 Q18 0 18 3 V24 L9 18 L0 24 Z" fill="#3a76b9"/></svg><div class="t" style="right:2011px;top:1486.7px;font-size:24px;color:#333">Service</div><div class="b" style="left:1849px;top:1545px;width:176px;height:59px;background:rgba(218,218,218,0.89)"></div><svg class="b" style="left:1868px;top:1564px" width="18" height="24" viewBox="0 0 18 24"><path d="M0 3 Q0 0 3 0 H15 Q18 0 18 3 V24 L9 18 L0 24 Z" fill="#3a76b9"/></svg><div class="t" style="right:2011px;top:1561.7px;font-size:24px;color:#333">Scheduled</div><div class="b" style="left:1838px;top:1620px;width:187px;height:59px;background:rgba(218,218,218,0.89)"></div><svg class="b" style="left:1857px;top:1639px" width="18" height="24" viewBox="0 0 18 24"><path d="M0 3 Q0 0 3 0 H15 Q18 0 18 3 V24 L9 18 L0 24 Z" fill="#3a76b9"/></svg><div class="t" style="right:2011px;top:1636.7px;font-size:24px;color:#333">Spare parts</div><div class="t" style="left:1497.0px;top:1845.0px;font-size:28px;color:#333;font-weight:700;transform-origin:0 23.7px;transform:scaleY(1.05);">Emergency Repair</div><svg class="b" style="left:1497.0px;top:1901px" width="38" height="37" viewBox="0 0 38 37"><path d="M19 1 L24.3 12.2 L36.5 13.6 L27.4 22 L29.9 34.2 L19 28 L8.1 34.2 L10.6 22 L1.5 13.6 L13.7 12.2 Z" fill="#bababa" stroke="#bababa" stroke-width="2" stroke-linejoin="round"/></svg><svg class="b" style="left:1557.1px;top:1901px" width="38" height="37" viewBox="0 0 38 37"><path d="M19 1 L24.3 12.2 L36.5 13.6 L27.4 22 L29.9 34.2 L19 28 L8.1 34.2 L10.6 22 L1.5 13.6 L13.7 12.2 Z" fill="#bababa" stroke="#bababa" stroke-width="2" stroke-linejoin="round"/></svg><svg class="b" style="left:1617.2px;top:1901px" width="38" height="37" viewBox="0 0 38 37"><path d="M19 1 L24.3 12.2 L36.5 13.6 L27.4 22 L29.9 34.2 L19 28 L8.1 34.2 L10.6 22 L1.5 13.6 L13.7 12.2 Z" fill="#bababa" stroke="#bababa" stroke-width="2" stroke-linejoin="round"/></svg><svg class="b" style="left:1677.3px;top:1901px" width="38" height="37" viewBox="0 0 38 37"><path d="M19 1 L24.3 12.2 L36.5 13.6 L27.4 22 L29.9 34.2 L19 28 L8.1 34.2 L10.6 22 L1.5 13.6 L13.7 12.2 Z" fill="#bababa" stroke="#bababa" stroke-width="2" stroke-linejoin="round"/></svg><svg class="b" style="left:1737.4px;top:1901px" width="38" height="37" viewBox="0 0 38 37"><path d="M19 1 L24.3 12.2 L36.5 13.6 L27.4 22 L29.9 34.2 L19 28 L8.1 34.2 L10.6 22 L1.5 13.6 L13.7 12.2 Z" fill="#bababa" stroke="#bababa" stroke-width="2" stroke-linejoin="round"/></svg><svg class="b" style="left:1497px;top:1981px" width="32" height="33" viewBox="0 0 32 33"><path d="M2 0 H14 Q16 0 17.5 1.5 L31 15 Q32.5 16.5 31 18 L18.5 31.5 Q17 33 15.5 31.5 L1.5 17.5 Q0 16 0 14 V2 Q0 0 2 0 Z" fill="#d8714f"/><circle cx="7.5" cy="7.5" r="3" fill="#fff"/></svg><div class="t" style="left:1545.0px;top:1978.5px;font-size:32px;color:#333;font-weight:400;transform-origin:0 27.1px;transform:scaleY(1.05);">€400.00</div><div class="b" style="left:1497px;top:2067px;width:512px;height:62px;background:#3a76b9;"></div><div class="t" style="left:1497px;width:512px;text-align:center;top:2083.0px;font-size:28px;color:#fff">View <svg width="20" height="16" viewBox="0 0 20 16" style="vertical-align:-1px"><path d="M2 2 L8 8 L2 14 M11 2 L17 8 L11 14" fill="none" stroke="#fff" stroke-width="3.6"/></svg></div><div class="b" style="left:3958px;top:1862px;width:61px;height:391px;background:linear-gradient(to right, rgba(0,0,0,0) 0%, rgba(0,0,0,0.05) 50%, rgba(0,0,0,0.3) 100%);-webkit-mask-image:linear-gradient(to bottom, transparent 0, #000 120px);"></div>
</body></html>
